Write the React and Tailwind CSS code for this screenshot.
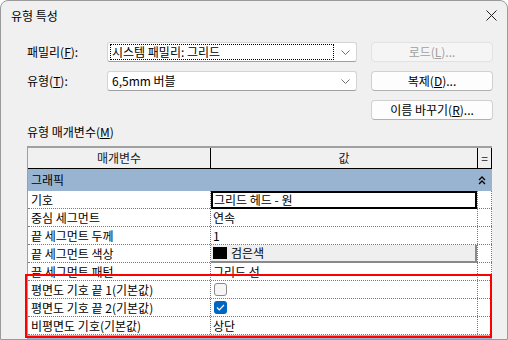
import React from 'react';

const font = { fontFamily: '"Noto Sans CJK KR", "Noto Sans", sans-serif' };

const Chevron = () => (
  <svg width="9" height="5" viewBox="0 0 9 5" className="text-[#707070]">
    <path d="M0.5 0.5 L4.5 4.5 L8.5 0.5" fill="none" stroke="currentColor" strokeWidth="1" />
  </svg>
);

const Combo = ({ children, focused }) => (
  <div className="w-[250px] h-[20px] bg-white border border-[#d4d4d4] border-b-[#a0a0a0] rounded-[3px] flex items-center pl-[2px] pr-[6px]">
    <div className={`flex-1 h-[16px] flex items-center pl-[1px] ${focused ? 'border border-dotted border-black' : 'border border-transparent'}`}>
      {children}
    </div>
    <div className="w-[16px] flex justify-end">
      <Chevron />
    </div>
  </div>
);

const Button = ({ children, disabled }) => (
  <div
    className={`w-[122px] h-[20px] rounded-[4px] flex items-center justify-center border ${
      disabled
        ? 'bg-[#f5f5f5] border-[#e2e2e2] text-[#a0a0a0]'
        : 'bg-[#fdfdfd] border-[#d0d0d0] border-b-[#b0b0b0] text-black'
    }`}
  >
    {children}
  </div>
);

const Row = ({ label, children }) => (
  <div className="flex h-[18px] border-b border-dotted border-[#7a7a7a]">
    <div className="w-[183px] border-r border-dotted border-[#7a7a7a] pl-[3px] leading-[17px] whitespace-nowrap">{label}</div>
    <div className="w-[267px] border-r border-dotted border-[#7a7a7a] flex items-center">{children}</div>
    <div className="w-[14px] border-r border-dotted border-[#7a7a7a]" />
  </div>
);

const Checkbox = ({ checked }) =>
  checked ? (
    <div className="ml-[3px] w-[13px] h-[13px] rounded-[3px] bg-[#0067c0] flex items-center justify-center">
      <svg width="9" height="7" viewBox="0 0 9 7">
        <path d="M1 3.5 L3.3 5.8 L8 1" fill="none" stroke="white" strokeWidth="1.2" />
      </svg>
    </div>
  ) : (
    <div className="ml-[3px] w-[13px] h-[13px] rounded-[3px] bg-[#f6f6f6] border border-[#8a8a8a]" />
  );

export default function App() {
  return (
    <div className="w-[508px] h-[340px] bg-white overflow-hidden text-[12px] text-black" style={font}>
      <div className="w-[508px] h-[340px] bg-[#f0f0f0] border border-[#9a9a9a] rounded-t-[8px] overflow-hidden">
        {/* Title bar */}
        <div className="h-[29px] flex items-center justify-between pl-[10px] pr-[10px]">
          <span>유형 특성</span>
          <svg width="11" height="11" viewBox="0 0 11 11">
            <path d="M0.5 0.5 L10.5 10.5 M10.5 0.5 L0.5 10.5" stroke="#202020" strokeWidth="1" />
          </svg>
        </div>

        <div className="pl-[26px]">
          {/* Family */}
          <div className="flex items-center mt-[12px] h-[20px]">
            <div className="w-[80px]">
              패밀리(<span className="underline">F</span>):
            </div>
            <Combo focused>시스템 패밀리: 그리드</Combo>
            <div className="ml-[14px]">
              <Button disabled>
                로드(<span className="underline">L</span>)...
              </Button>
            </div>
          </div>

          {/* Type */}
          <div className="flex items-center mt-[9px] h-[20px]">
            <div className="w-[80px]">
              유형(<span className="underline">T</span>):
            </div>
            <Combo>6,5mm 버블</Combo>
            <div className="ml-[14px]">
              <Button>
                복제(<span className="underline">D</span>)...
              </Button>
            </div>
          </div>

          <div className="flex mt-[9px] h-[20px]">
            <div className="ml-[344px]">
              <Button>
                이름 바꾸기(<span className="underline">R</span>)...
              </Button>
            </div>
          </div>

          <div className="mt-[3px] h-[18px] leading-[18px]">
            유형 매개변수(<span className="underline">M</span>)
          </div>

          {/* Table */}
          <div className="relative mt-[5px] w-[465px] border-l border-t-2 border-[#a0a0a0]">
            <div className="flex h-[21px] bg-[#f0f0f0] border-b border-black text-[#202020]">
              <div className="w-[183px] border-r border-black flex items-center justify-center">매개변수</div>
              <div className="w-[267px] border-r border-black flex items-center justify-center">값</div>
              <div className="w-[14px] border-r border-black flex items-center justify-center leading-none">=</div>
            </div>

            <div className="flex items-center justify-between h-[22px] bg-[#99b4d1] pl-[3px] pr-[6px]">
              <span>그래픽</span>
              <svg width="8" height="9" viewBox="0 0 8 9">
                <path d="M1 4 L4 1 L7 4 M1 8 L4 5 L7 8" fill="none" stroke="black" strokeWidth="1.3" />
              </svg>
            </div>

            <div className="bg-white">
              <Row label="기호">
                <div className="w-full h-[18px] border-2 border-black bg-white pl-[1px] leading-[14px]">그리드 헤드 - 원</div>
              </Row>
              <Row label="중심 세그먼트">
                <span className="pl-[2px]">연속</span>
              </Row>
              <Row label="끝 세그먼트 두께">
                <span className="pl-[2px]">1</span>
              </Row>
              <Row label="끝 세그먼트 색상">
                <div className="w-full h-[18px] bg-[#efefef] border-r-2 border-b-2 border-[#8a8a8a] flex items-center pl-[2px]">
                  <div className="w-[14px] h-[12px] bg-black mr-[4px]" />
                  <span>검은색</span>
                </div>
              </Row>
              <Row label="끝 세그먼트 패턴">
                <span className="pl-[2px]">그리드 선</span>
              </Row>
              <Row label="평면도 기호 끝 1(기본값)">
                <Checkbox />
              </Row>
              <Row label="평면도 기호 끝 2(기본값)">
                <Checkbox checked />
              </Row>
              <Row label="비평면도 기호(기본값)">
                <span className="pl-[2px]">상단</span>
              </Row>
            </div>
            <div className="h-[10px] bg-[#99b4d1]" />

            {/* highlight annotation */}
            <div className="absolute left-[-3px] top-[126px] w-[467px] h-[64px] border-2 border-[#ff0000] pointer-events-none" />
          </div>
        </div>
      </div>
    </div>
  );
}
